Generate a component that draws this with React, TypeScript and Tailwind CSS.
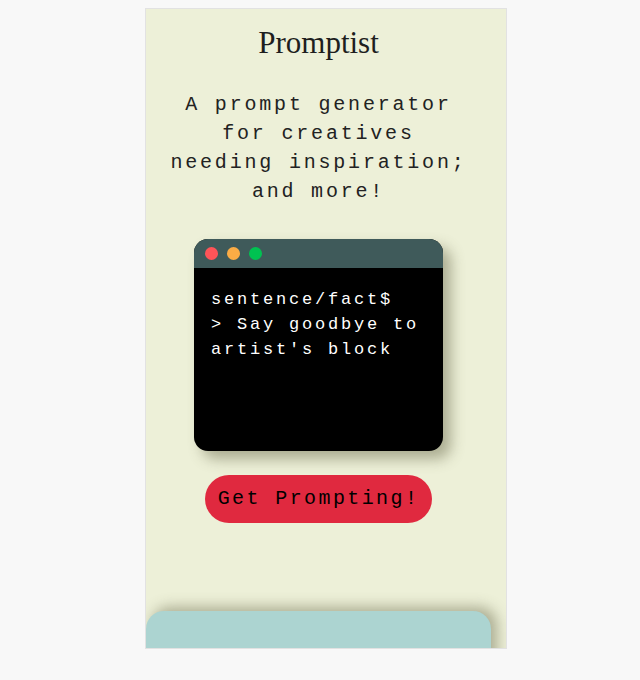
import React from 'react'

const mono = { fontFamily: '"Liberation Mono", "DejaVu Sans Mono", monospace' }

const Terminal = () => {
    return (
        <div className="w-[249px] h-[212px] rounded-[14px] bg-black overflow-hidden shadow-[8px_8px_14px_rgba(90,90,60,0.45)]">
            <div className="h-[29px] bg-[#3f5a5a] flex items-center gap-[9px] pl-[11px]">
                <span className="w-[13px] h-[13px] rounded-full bg-[#ff5458]" />
                <span className="w-[13px] h-[13px] rounded-full bg-[#fbac45]" />
                <span className="w-[13px] h-[13px] rounded-full bg-[#00c251]" />
            </div>
            <div
                className="px-[17px] pt-[19px] text-white text-[17px] leading-[25px] tracking-[2.8px]"
                style={mono}
            >
                <div>sentence/fact$</div>
                <div>&gt; Say goodbye to</div>
                <div>artist's block</div>
            </div>
        </div>
    )
}

export default function App() {
    return (
        <div className="min-h-[680px] bg-[#f8f8f8] pt-2 pl-[145px]">
            <div className="w-[362px] h-[641px] border border-[#e2e2e2] bg-[#edf0d8] overflow-hidden">
                <div className="w-[345px] flex flex-col items-center">
                    <h1
                        className="mt-[15px] text-[31px] leading-[38px] text-[#1e1e1e]"
                        style={{ fontFamily: '"Liberation Serif", serif' }}
                    >
                        Promptist
                    </h1>
                    <p
                        className="mt-[28px] text-center text-[20px] leading-[29px] tracking-[2.8px] text-[#222]"
                        style={mono}
                    >
                        A prompt generator<br />
                        for creatives<br />
                        needing inspiration;<br />
                        and more!
                    </p>
                    <div className="mt-[33px]">
                        <Terminal />
                    </div>
                    <button
                        className="mt-[24px] w-[227px] h-[48px] rounded-full bg-[#e0293f] text-black text-[20px] tracking-[2.4px]"
                        style={mono}
                    >
                        Get Prompting!
                    </button>
                    <div className="mt-[88px] w-[345px] h-[80px] rounded-t-[18px] bg-[#acd4d1] shadow-[6px_-4px_14px_rgba(90,90,60,0.45)]" />
                </div>
            </div>
        </div>
    )
}
